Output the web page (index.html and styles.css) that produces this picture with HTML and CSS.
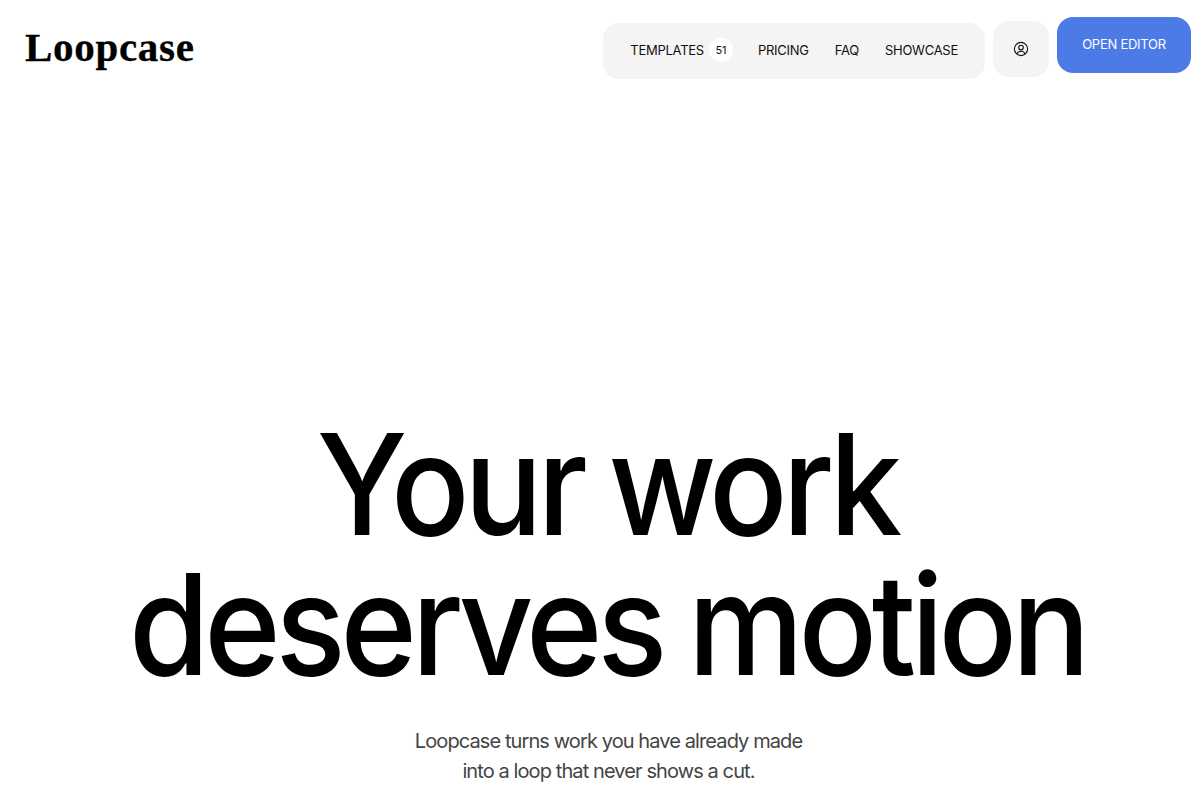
FILE: index.html
```html
<!DOCTYPE html>
<html lang="en">
<head>
<meta charset="utf-8">
<title>Loopcase</title>
<link rel="stylesheet" href="styles.css">
</head>
<body>
<header class="topbar">
  <a class="logo" href="#">Loopcase</a>
  <div class="actions">
    <nav class="nav">
      <a class="nav-link" href="#">TEMPLATES <span class="badge">51</span></a>
      <a class="nav-link" href="#">PRICING</a>
      <a class="nav-link" href="#">FAQ</a>
      <a class="nav-link" href="#">SHOWCASE</a>
    </nav>
    <a class="profile" href="#" aria-label="Account">
      <svg width="16" height="16" viewBox="0 0 16 16" fill="none" stroke="#111" stroke-width="1.1">
        <circle cx="8" cy="8" r="6.6"/>
        <circle cx="8" cy="6.6" r="2.3"/>
        <path d="M3.9 13c.7-1.900 2.200-2.800 4.100-2.800s3.400.9 4.100 2.800"/>
      </svg>
    </a>
    <a class="cta" href="#">OPEN EDITOR</a>
  </div>
</header>
<main class="hero">
  <h1 class="title">Your work<br>deserves motion</h1>
  <p class="lead">Loopcase turns work you have already made<br>into a loop that never shows a cut.</p>
</main>
</body>
</html>
```

FILE: styles.css
```css
* { box-sizing: border-box; }
html, body { margin: 0; height: 100%; }
body {
  background: #fff;
  color: #000;
  font-family: Inter, "Liberation Sans", sans-serif;
  overflow: hidden;
}
a { color: inherit; text-decoration: none; }

.topbar {
  display: flex;
  justify-content: space-between;
  align-items: flex-start;
  padding: 17px 9px 0 25px;
}
.logo {
  font-family: "Liberation Serif", serif;
  font-weight: 700;
  font-size: 41px;
  line-height: 48px;
  margin-top: 6px;
  letter-spacing: 0.7px;
  -webkit-text-stroke: 0.3px #000;
  color: #000;
}
.actions { display: flex; align-items: flex-start; gap: 8px; }

.nav {
  display: flex;
  align-items: center;
  gap: 26px;
  height: 56px;
  margin-top: 6px;
  padding: 0 27px 2px 27px;
  background: #f4f4f4;
  border-radius: 16px;
}
.nav-link {
  display: flex;
  align-items: center;
  gap: 5px;
  font-size: 13px;
  letter-spacing: -0.02em;
  color: #111;
}
.badge {
  display: flex;
  align-items: center;
  justify-content: center;
  width: 24px;
  height: 24px;
  margin-right: -1px;
  border-radius: 50%;
  background: #fff;
  font-size: 11px;
}
.profile {
  display: flex;
  align-items: center;
  justify-content: center;
  width: 56px;
  height: 56px;
  margin-top: 4px;
  background: #f4f4f4;
  border-radius: 16px;
}
.cta {
  display: flex;
  align-items: center;
  justify-content: center;
  width: 134px;
  height: 56px;
  padding-bottom: 2px;
  background: #4c7be8;
  border-radius: 16px;
  color: #fff;
  font-size: 13px;
  letter-spacing: -0.02em;
}

.hero { text-align: center; padding: 335px 0 0 17px; }
.title {
  margin: 0 3px 0 0;
  font-size: 140px;
  font-weight: 530;
  line-height: 140px;
  letter-spacing: -0.04em;
  word-spacing: -4px;
  transform: scaleX(0.93);
}
.lead {
  margin: 32px 0 0;
  font-size: 20px;
  line-height: 30px;
  letter-spacing: -0.045em;
  color: #444;
}
```
